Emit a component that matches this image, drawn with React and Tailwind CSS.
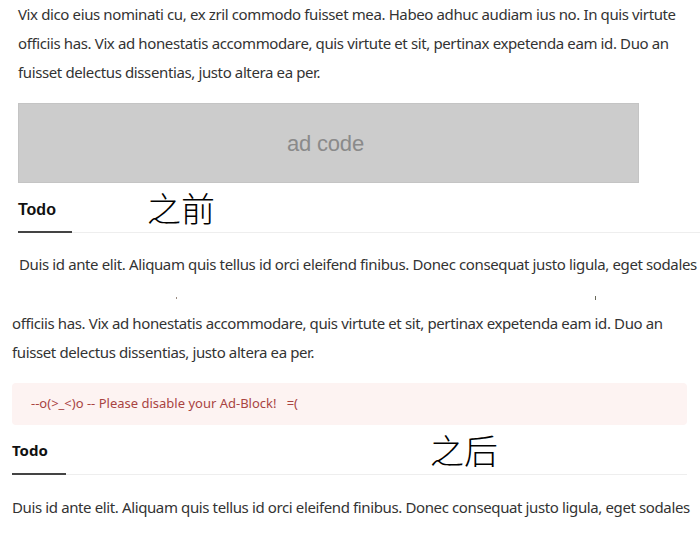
import React from "react";

const body = "font-['Noto_Sans',sans-serif] text-[15px] leading-[29px] tracking-[-0.38px] text-[#333]";

const Tabs = ({ label, note, noteLeft, font, size }) => (
  <div className="relative">
    <div className="flex h-[50px] border-b border-[#eee]">
      <div className={`flex w-[54px] items-center border-b-2 border-[#444] -mb-px font-bold text-[#111] ${size} ${font}`}>
        {label}
      </div>
    </div>
    <span
      className={`absolute top-[8px] ${noteLeft} text-[34px] leading-[34px] font-light text-black font-['Noto_Sans_CJK_SC',serif]`}
    >
      {note}
    </span>
  </div>
);

export default function App() {
  return (
    <div className="w-[700px] h-[550px] overflow-hidden bg-white">
      <div className="pl-[18px]">
        <p className={body}>
          Vix dico eius nominati cu, ex zril commodo fuisset mea. Habeo adhuc audiam ius no. In quis virtute
          <br />
          officiis has. Vix ad honestatis accommodare, quis virtute et sit, pertinax expetenda eam id. Duo an
          <br />
          fuisset delectus dissentias, justo altera ea per.
        </p>
        <div className="mt-4 flex h-[80px] w-[621px] items-center justify-center border border-[#c4c4c4] bg-[#cccccc] pr-[6px]">
          <span className="font-['Liberation_Sans',sans-serif] text-[22px] tracking-[-0.2px] text-[#8a8a8a]">ad code</span>
        </div>
        <Tabs
          label={<span className="pt-[5px]">Todo</span>}
          note="之前"
          noteLeft="left-[129px]"
          size="text-[16px]"
          font="font-['Liberation_Sans',sans-serif]"
        />
        <p className={`${body} mt-[17px] whitespace-nowrap pl-px`}>
          Duis id ante elit. Aliquam quis tellus id orci eleifend finibus. Donec consequat justo ligula, eget sodales
        </p>
        <div className="relative h-[30px]">
          <span className="absolute left-[158px] top-[18px] h-[2px] w-px bg-[#9a8a80]" />
          <span className="absolute left-[577px] top-[17px] h-[4px] w-px bg-[#6a6a5a]" />
        </div>
      </div>
      <div className="pl-3 pr-[13px]">
        <p className={body}>
          officiis has. Vix ad honestatis accommodare, quis virtute et sit, pertinax expetenda eam id. Duo an
          <br />
          fuisset delectus dissentias, justo altera ea per.
        </p>
        <div className="mt-4 flex h-[42px] items-center rounded bg-[#fdf3f2] pl-[19px]">
          <span className="font-['Noto_Sans',sans-serif] text-[13px] text-[#a94442] whitespace-pre">
            --o(&gt;_&lt;)o -- Please disable your Ad-Block!   =(
          </span>
        </div>
        <Tabs
          label={<span className="pt-[2px]">Todo</span>}
          note="之后"
          noteLeft="left-[418px]"
          size="text-[15px]"
          font="font-['Noto_Sans',sans-serif]"
        />
        <p className={`${body} mt-[18px] whitespace-nowrap`}>
          Duis id ante elit. Aliquam quis tellus id orci eleifend finibus. Donec consequat justo ligula, eget sodales
        </p>
      </div>
    </div>
  );
}
